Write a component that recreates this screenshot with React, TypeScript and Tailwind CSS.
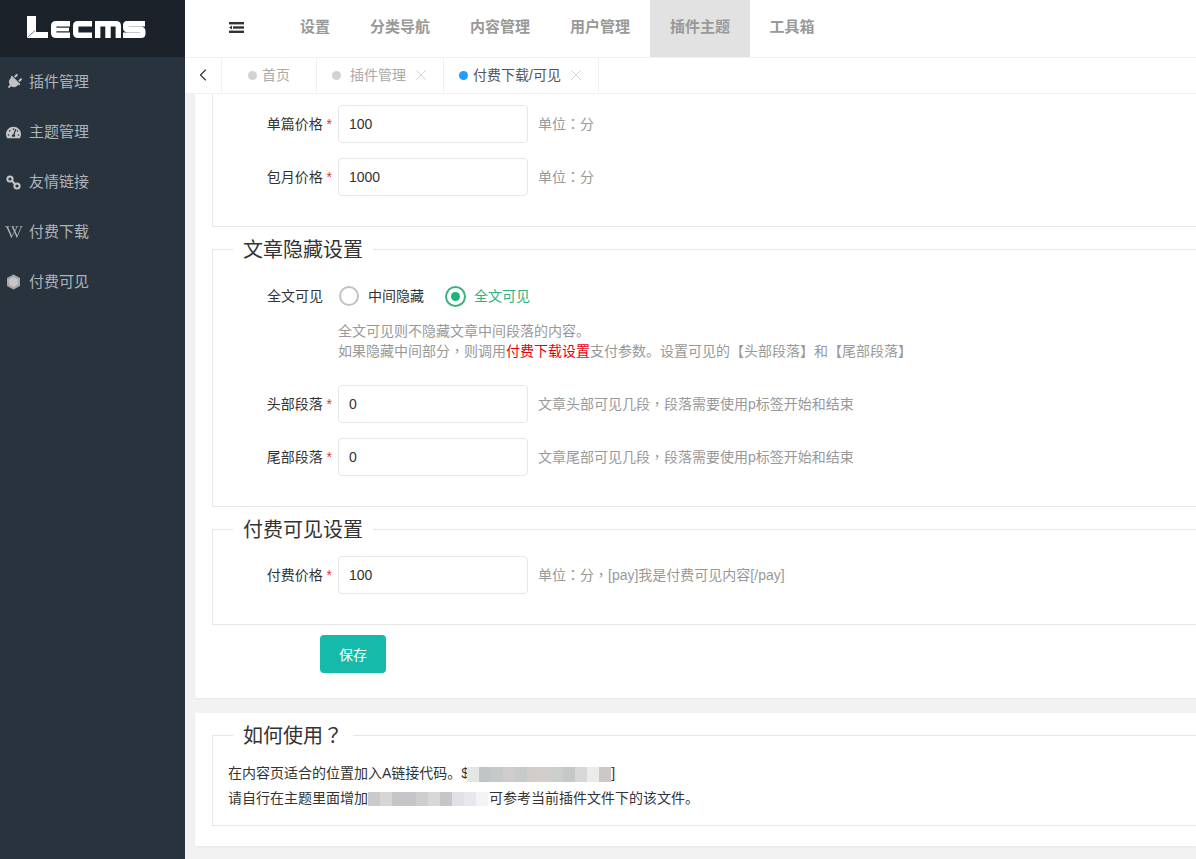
import React from 'react';
import { FaPlug, FaTachometerAlt, FaWikipediaW } from 'react-icons/fa';
import { ChevronLeft, X } from 'lucide-react';

const Logo = () => (
  <svg width="120" height="24" viewBox="0 0 120 24" fill="none" stroke="#fff" strokeWidth="5.4">
    <polygon points="0,0 9,0 9,16 21,16 21,22 0,22" fill="#fff" stroke="none" />
    <path d="M0.5 21.5L8 14.5" stroke="#7d8286" strokeWidth="1" />
    <path d="M43 7.7H29Q26.7 7.7 26.7 10V17Q26.7 19.3 29 19.3H43" />
    <path d="M27 13.5H42" strokeWidth="3.6" />
    <path d="M65 7.7H51Q48.7 7.7 48.7 10V17Q48.7 19.3 51 19.3H65" />
    <path d="M70.7 22V7.7H89Q91.3 7.7 91.3 10V22M81 7.7V22" />
    <path d="M118 7.7H100Q98.7 7.7 98.7 9.5V11.5Q98.7 13.5 100.5 13.5H114Q115.8 13.5 115.8 15.5V17.5Q115.8 19.3 114 19.3H96" />
  </svg>
);

const HexIcon = () => (
  <svg width="15" height="16" viewBox="0 0 15 16">
    <polygon points="7.5,0.5 14,4 14,12 7.5,15.5 1,12 1,4" fill="#a9a8ad" />
    <polygon points="7.5,3 11.8,5.4 11.8,10.6 7.5,13 3.2,10.6 3.2,5.4" fill="#c6c6c8" />
  </svg>
);

const ChainIcon = () => (
  <svg width="15" height="15" viewBox="0 0 15 15" fill="none" stroke="#c4c6c8" strokeWidth="2">
    <circle cx="4" cy="4" r="2.6" />
    <circle cx="11" cy="11" r="2.6" />
    <path d="M5.8 5.8L9.2 9.2" />
  </svg>
);

const sideItems = [
  { icon: <FaPlug size={16} className="rotate-45 text-[#c0c2c4]" />, label: '插件管理' },
  { icon: <FaTachometerAlt size={15} className="text-[#c4c6c8]" />, label: '主题管理' },
  { icon: <ChainIcon />, label: '友情链接' },
  { icon: <FaWikipediaW size={18} />, label: '付费下载' },
  { icon: <HexIcon />, label: '付费可见' },
];

const navItems = [
  { label: '设置', cls: 'w-[70px]' },
  { label: '分类导航', cls: 'w-[100px]' },
  { label: '内容管理', cls: 'w-[100px]' },
  { label: '用户管理', cls: 'w-[100px]' },
  { label: '插件主题', cls: 'w-[100px] bg-[#e2e2e2] text-[#555]' },
  { label: '工具箱', cls: 'w-[84px]' },
];

// the reference centres full-width punctuation, the TC cut of the font does too
const Punct = ({ text }: { text: string }) => (
  <>
    {text.split(/([：，？])/).map((part, i) =>
      i % 2 ? (
        <span key={i} className="leading-[0] font-['Noto_Sans_CJK_TC',sans-serif]">
          {part}
        </span>
      ) : (
        part
      )
    )}
  </>
);

const Field = ({ label, value, help }: { label: string; value: string; help: string }) => (
  <div className="flex items-center h-[38px]">
    <label className="w-[125px] shrink-0 pr-[6px] text-right text-[#333]">
      {label} <span className="text-[#d9363e]">*</span>
    </label>
    <input
      defaultValue={value}
      className="w-[190px] h-[38px] shrink-0 pl-[10px] border border-[#e6e6e6] rounded-sm bg-white text-[#333] outline-none"
    />
    <span className="ml-[10px] text-[#999]">
      <Punct text={help} />
    </span>
  </div>
);

const Legend = ({ children }: { children: React.ReactNode }) => (
  <legend className="ml-5 px-[10px] pt-[2px] text-[20px] leading-[26px] text-[#333]">{children}</legend>
);

const Mosaic = ({ colors, cls }: { colors: string[]; cls: string }) => (
  <span className={`inline-flex align-middle blur-[0.7px] ${cls}`}>
    {colors.map((c, i) => (
      <span key={i} className="w-3 h-full" style={{ background: c }} />
    ))}
  </span>
);

const App = () => {
  return (
    <div className="flex w-[1196px] h-[859px] overflow-hidden bg-[#f2f2f2] text-sm font-['Liberation_Sans','Noto_Sans_CJK_SC',sans-serif]">
      {/* sidebar */}
      <aside className="w-[185px] shrink-0 bg-[#28333e]">
        <div className="h-[57px] bg-[#1c222a] pl-[27px] pt-4">
          <Logo />
        </div>
        {sideItems.map((item) => (
          <div key={item.label} className="flex items-center h-[50px] text-[15px] text-[#b0b3b7]">
            <span className="w-[29px] h-5 shrink-0 flex items-center justify-center pr-[3px] pl-[1px]">{item.icon}</span>
            {item.label}
          </div>
        ))}
      </aside>

      <main className="flex-1 min-w-0 flex flex-col">
        {/* top nav */}
        <header className="flex h-[58px] shrink-0 bg-white border-b border-[#f0f0f0]">
          <div className="w-[95px] flex items-center justify-center pl-[7px] pb-[3px]">
            <svg width="15" height="11" viewBox="0 0 15 11" fill="#333">
              <rect x="0" y="0" width="15" height="2.4" />
              <rect x="4" y="4.3" width="11" height="2.4" />
              <rect x="0" y="8.6" width="15" height="2.4" />
              <polygon points="0,5.5 3,3.5 3,7.5" />
            </svg>
          </div>
          {navItems.map((n) => (
            <div
              key={n.label}
              className={`flex items-center justify-center h-[57px] pb-[3px] text-[15px] font-bold text-[#999] ${n.cls}`}
            >
              {n.label}
            </div>
          ))}
        </header>

        {/* tabs */}
        <div className="flex h-9 shrink-0 pb-px bg-white border-b border-[#f0f0f0] text-[#aaa]">
          <div className="w-[37px] flex items-center justify-center border-r border-[#f0f0f0] text-[#333]">
            <ChevronLeft size={20} strokeWidth={1.4} />
          </div>
          <div className="w-[95px] flex items-center pl-[26px] border-r border-[#f0f0f0]">
            <span className="w-[9px] h-[9px] rounded-full bg-[#d2d2d2] mr-[5px]" />
            首页
          </div>
          <div className="w-[127px] flex items-center pl-[15px] border-r border-[#f0f0f0]">
            <span className="w-[9px] h-[9px] rounded-full bg-[#d2d2d2] mr-[9px]" />
            插件管理
            <X size={18} strokeWidth={1} className="ml-[6px] text-[#c4c4c4]" />
          </div>
          <div className="w-[155px] flex items-center pl-[15px] border-r border-[#f0f0f0] text-[#555]">
            <span className="w-[9px] h-[9px] rounded-full bg-[#1e9fff] mr-[5px]" />
            付费下载/可见
            <X size={18} strokeWidth={1} className="ml-[6px] text-[#c4c4c4]" />
          </div>
        </div>

        {/* content */}
        <div className="flex-1 min-h-0 overflow-hidden pl-[10px]">
          <div className="bg-white pl-[17px] pb-[25px] shadow-[0_1px_2px_rgba(0,0,0,0.05)]">
            <div className="border-l border-b border-[#e6e6e6] pt-[11px] pb-[30px] flex flex-col gap-[15px]">
              <Field label="单篇价格" value="100" help="单位：分" />
              <Field label="包月价格" value="1000" help="单位：分" />
            </div>

            <fieldset className="mt-2 border border-r-0 border-[#e6e6e6]">
              <Legend>文章隐藏设置</Legend>
              <div className="pt-[13px] pb-[30px]">
                <div className="flex items-center h-10">
                  <label className="w-[125px] shrink-0 text-right text-[#333]">
                    <span className="mr-[15px]">全文可见</span>
                  </label>
                  <span className="w-5 h-5 ml-[1px] rounded-full border-2 border-[#c2c2c2]" />
                  <span className="ml-[9px] text-[#333]">中间隐藏</span>
                  <span className="ml-[21px] w-[21px] h-[21px] rounded-full border-2 border-[#3bb27f] flex items-center justify-center">
                    <span className="w-[9px] h-[9px] rounded-full bg-[#1cb47a]" />
                  </span>
                  <span className="ml-[8px] text-[#2fb282]">全文可见</span>
                </div>
                <div className="mt-[5px] ml-[125px] leading-5 text-[#999]">
                  <p>全文可见则不隐藏文章中间段落的内容。</p>
                  <p>
                    <Punct text="如果隐藏中间部分，则调用" />
                    <span className="text-[#e60012]">付费下载设置</span>支付参数。设置可见的【头部段落】和【尾部段落】
                  </p>
                </div>
                <div className="mt-6 flex flex-col gap-[15px]">
                  <Field label="头部段落" value="0" help="文章头部可见几段，段落需要使用p标签开始和结束" />
                  <Field label="尾部段落" value="0" help="文章尾部可见几段，段落需要使用p标签开始和结束" />
                </div>
              </div>
            </fieldset>

            <fieldset className="mt-2 border border-r-0 border-[#e6e6e6]">
              <Legend>付费可见设置</Legend>
              <div className="pt-[13px] pb-[30px]">
                <Field label="付费价格" value="100" help="单位：分，[pay]我是付费可见内容[/pay]" />
              </div>
            </fieldset>

            <button className="mt-[10px] ml-[108px] w-[66px] h-[38px] pt-px rounded-sm bg-[#16baaa] text-white">保存</button>
          </div>

          <div className="mt-[15px] bg-white pl-[17px] pt-2 pb-5 shadow-[0_1px_2px_rgba(0,0,0,0.05)]">
            <fieldset className="border border-r-0 border-[#e6e6e6]">
              <Legend>
                <Punct text="如何使用？" />
              </Legend>
              <div className="pt-3 pb-[14px] pl-[15px] leading-[25px] text-[#333]">
                <p>
                  在内容页适合的位置加入A链接代码。$
                  <Mosaic
                    cls="h-[15px] -ml-[2px]"
                    colors={['#e4e6e5', '#c0c6c6', '#c6c9c8', '#cfcdcb', '#c6cac9', '#d3cdca', '#d0cfcb', '#cccecb', '#c4c8c8', '#d6d7d6', '#ebebe9', '#cdc8c5']}
                  />
                  ]
                </p>
                <p>
                  请自行在主题里面增加
                  <Mosaic
                    cls="h-[14px]"
                    colors={['#c8cacb', '#d6d7d2', '#c9c5c7', '#c6c5ca', '#d0cecc', '#d8d9d6', '#c8c6c5', '#e0e0e6', '#e8e8ec', '#f4f4f6']}
                  />
                  <span className="ml-[1px]">可参考当前插件文件下的该文件。</span>
                </p>
              </div>
            </fieldset>
          </div>
        </div>
      </main>
    </div>
  );
};

export default App;
